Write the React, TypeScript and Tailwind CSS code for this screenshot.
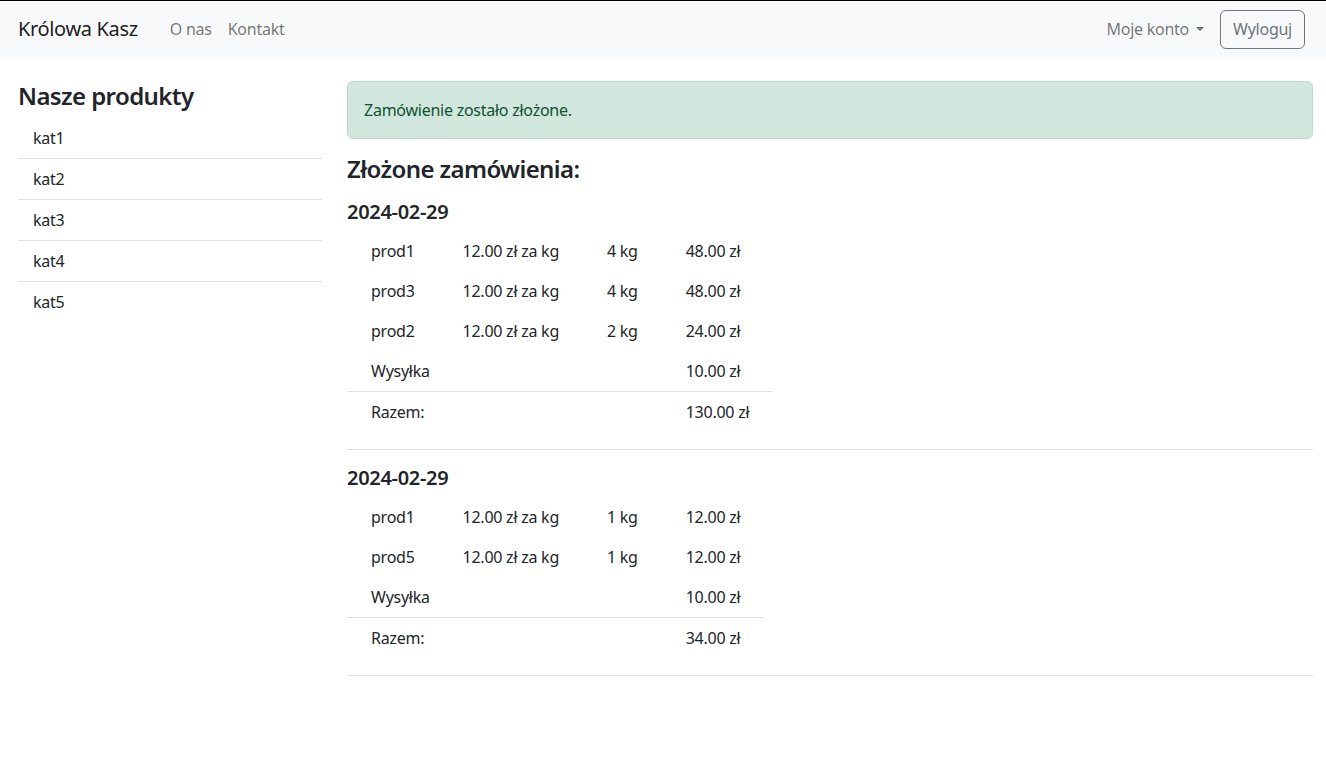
const categories = ["kat1", "kat2", "kat3", "kat4", "kat5"];

interface OrderItem {
  name: string;
  price: string;
  qty: string;
  total: string;
}

interface Order {
  date: string;
  items: OrderItem[];
  shipping: string;
  sum: string;
}

const orders: Order[] = [
  {
    date: "2024-02-29",
    items: [
      { name: "prod1", price: "12.00 zł za kg", qty: "4 kg", total: "48.00 zł" },
      { name: "prod3", price: "12.00 zł za kg", qty: "4 kg", total: "48.00 zł" },
      { name: "prod2", price: "12.00 zł za kg", qty: "2 kg", total: "24.00 zł" },
    ],
    shipping: "10.00 zł",
    sum: "130.00 zł",
  },
  {
    date: "2024-02-29",
    items: [
      { name: "prod1", price: "12.00 zł za kg", qty: "1 kg", total: "12.00 zł" },
      { name: "prod5", price: "12.00 zł za kg", qty: "1 kg", total: "12.00 zł" },
    ],
    shipping: "10.00 zł",
    sum: "34.00 zł",
  },
];

function OrderBlock({ order }: { order: Order }) {
  return (
    <div>
      <h5 className="text-[20px] font-semibold leading-[24px] tracking-[-0.3px] mb-[7px]">{order.date}</h5>
      <table className="border-collapse text-[16px] leading-[24px]">
        <tbody>
          {order.items.map((item, index) => (
            <tr key={index}>
              <td className="px-6 py-2">{item.name}</td>
              <td className="px-6 py-2">{item.price}</td>
              <td className="px-6 py-2">{item.qty}</td>
              <td className="px-6 py-2">{item.total}</td>
            </tr>
          ))}
          <tr className="border-b border-[#dee2e6]">
            <td className="px-6 py-2" colSpan={3}>Wysyłka</td>
            <td className="px-6 py-2">{order.shipping}</td>
          </tr>
          <tr>
            <td className="px-6 py-2" colSpan={3}>Razem:</td>
            <td className="px-6 py-2">{order.sum}</td>
          </tr>
        </tbody>
      </table>
      <hr className="mt-[17px] mb-4 border-t border-[#dee2e6]" />
    </div>
  );
}

export default function App() {
  return (
    <div
      className="min-h-screen bg-white text-[#212529] tracking-[-0.25px]"
      style={{ fontFamily: '"Noto Sans", "DejaVu Sans", sans-serif' }}
    >
      {/* Navbar */}
      <nav className="h-[57px] bg-[#f8f9fa] border-t border-black flex items-center pl-[18px] pr-[21px]">
        <a className="text-[20px] text-black/90 tracking-[-0.35px] mr-6">Królowa Kasz</a>
        <a className="px-2 text-black/55">O nas</a>
        <a className="px-2 text-black/55">Kontakt</a>
        <div className="ml-auto flex items-center gap-4">
          <a className="flex items-center text-black/55">
            Moje konto
            <span className="ml-[7px] w-0 h-0 border-t-[4px] border-t-current border-x-[4px] border-x-transparent" />
          </a>
          <button className="h-[39px] px-3 border border-[#6c757d] rounded-[6px] text-[#6c757d]">
            Wyloguj
          </button>
        </div>
      </nav>

      {/* Content */}
      <div className="flex gap-[25px] pl-[18px] pr-[13px] pt-6">
        <aside className="w-[304px] flex-shrink-0">
          <h4 className="text-[24px] font-semibold leading-[29px] tracking-[-0.6px] mb-2">Nasze produkty</h4>
          <ul>
            {categories.map((cat, index) => (
              <li
                key={cat}
                className={`pl-[15px] pr-4 py-2 leading-[24px] ${index < categories.length - 1 ? "border-b border-[#dee2e6]" : ""}`}
              >
                {cat}
              </li>
            ))}
          </ul>
        </aside>

        <main className="flex-1">
          <div className="bg-[#d1e7dd] border border-[#badbcc] text-[#0f5132] rounded-[6px] px-4 py-4 leading-[24px] mb-4">
            Zamówienie zostało złożone.
          </div>
          <h4 className="text-[24px] font-semibold leading-[28px] tracking-[-0.6px] mb-[17px]">Złożone zamówienia:</h4>
          {orders.map((order, index) => (
            <OrderBlock key={index} order={order} />
          ))}
        </main>
      </div>
    </div>
  );
}
